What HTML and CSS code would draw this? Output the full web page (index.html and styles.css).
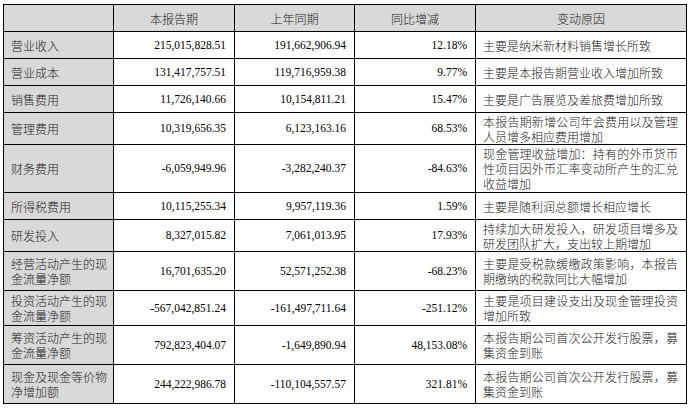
FILE: index.html
```html
<!DOCTYPE html>
<html lang="zh-CN">
<head>
<meta charset="utf-8">
<link rel="stylesheet" href="styles.css">
</head>
<body>
<table class="fin">
  <colgroup>
    <col class="c-label">
    <col class="c-num">
    <col class="c-num2">
    <col class="c-num">
    <col class="c-reason">
  </colgroup>
  <thead>
    <tr class="h27">
      <th class="gray"></th>
      <th class="gray">本报告期</th>
      <th class="gray">上年同期</th>
      <th class="gray">同比增减</th>
      <th class="gray">变动原因</th>
    </tr>
  </thead>
  <tbody>
    <tr class="h27">
      <td class="label">营业收入</td>
      <td class="num">215,015,828.51</td>
      <td class="num">191,662,906.94</td>
      <td class="num">12.18%</td>
      <td class="reason">主要是纳米新材料销售增长所致</td>
    </tr>
    <tr class="h27">
      <td class="label">营业成本</td>
      <td class="num">131,417,757.51</td>
      <td class="num">119,716,959.38</td>
      <td class="num">9.77%</td>
      <td class="reason">主要是本报告期营业收入增加所致</td>
    </tr>
    <tr class="h27">
      <td class="label">销售费用</td>
      <td class="num">11,726,140.66</td>
      <td class="num">10,154,811.21</td>
      <td class="num">15.47%</td>
      <td class="reason">主要是广告展览及差旅费增加所致</td>
    </tr>
    <tr class="h32">
      <td class="label">管理费用</td>
      <td class="num">10,319,656.35</td>
      <td class="num">6,123,163.16</td>
      <td class="num">68.53%</td>
      <td class="reason">本报告期新增公司年会费用以及管理人员增多相应费用增加</td>
    </tr>
    <tr class="h48">
      <td class="label">财务费用</td>
      <td class="num">-6,059,949.96</td>
      <td class="num">-3,282,240.37</td>
      <td class="num">-84.63%</td>
      <td class="reason">现金管理收益增加：持有的外币货币性项目因外币汇率变动所产生的汇兑收益增加</td>
    </tr>
    <tr class="h27">
      <td class="label">所得税费用</td>
      <td class="num">10,115,255.34</td>
      <td class="num">9,957,119.36</td>
      <td class="num">1.59%</td>
      <td class="reason">主要是随利润总额增长相应增长</td>
    </tr>
    <tr class="h32">
      <td class="label">研发投入</td>
      <td class="num">8,327,015.82</td>
      <td class="num">7,061,013.95</td>
      <td class="num">17.93%</td>
      <td class="reason">持续加大研发投入，研发项目增多及研发团队扩大，支出较上期增加</td>
    </tr>
    <tr class="h39">
      <td class="label">经营活动产生的现金流量净额</td>
      <td class="num">16,701,635.20</td>
      <td class="num">52,571,252.38</td>
      <td class="num">-68.23%</td>
      <td class="reason">主要是受税款缓缴政策影响，本报告期缴纳的税款同比大幅增加</td>
    </tr>
    <tr class="h35">
      <td class="label">投资活动产生的现金流量净额</td>
      <td class="num">-567,042,851.24</td>
      <td class="num">-161,497,711.64</td>
      <td class="num">-251.12%</td>
      <td class="reason">主要是项目建设支出及现金管理投资增加所致</td>
    </tr>
    <tr class="h39">
      <td class="label">筹资活动产生的现金流量净额</td>
      <td class="num">792,823,404.07</td>
      <td class="num">-1,649,890.94</td>
      <td class="num">48,153.08%</td>
      <td class="reason">本报告期公司首次公开发行股票，募集资金到账</td>
    </tr>
    <tr class="h39">
      <td class="label">现金及现金等价物净增加额</td>
      <td class="num">244,222,986.78</td>
      <td class="num">-110,104,557.57</td>
      <td class="num">321.81%</td>
      <td class="reason">本报告期公司首次公开发行股票，募集资金到账</td>
    </tr>
  </tbody>
</table>
</body>
</html>
```

FILE: styles.css
```css
html, body {
  background: #ffffff;
}
body {
  margin: 4px 0 0 3px;
  font-family: "Noto Sans CJK SC", "Liberation Serif", serif;
  color: #222;
}
.fin {
  border-collapse: collapse;
  table-layout: fixed;
  width: 684px;
  font-size: 12px;
  line-height: 15px;
}
.c-label { width: 110px; }
.c-num { width: 121px; }
.c-num2 { width: 120px; }
.c-reason { width: 211px; }

.fin th,
.fin td {
  border: 1px solid #000;
  padding: 0;
  vertical-align: middle;
}
.fin th {
  text-align: center;
  font-weight: 300;
}
.fin .gray,
.fin .label {
  background: #d9d9d9;
}
.fin td.label {
  padding: 0 3px 0 7px;
  text-align: left;
  font-weight: 300;
}
.fin td.num {
  font-family: "Liberation Serif", serif;
  font-size: 11.5px;
  text-align: right;
  padding-right: 8px;
  color: #000;
}
.fin td.reason {
  padding: 0 8px 0 7px;
  text-align: justify;
  font-weight: 300;
}
.h27 { height: 27px; }
.h32 { height: 32px; }
.h35 { height: 35px; }
.h39 { height: 39px; }
.h48 { height: 48px; }
```
